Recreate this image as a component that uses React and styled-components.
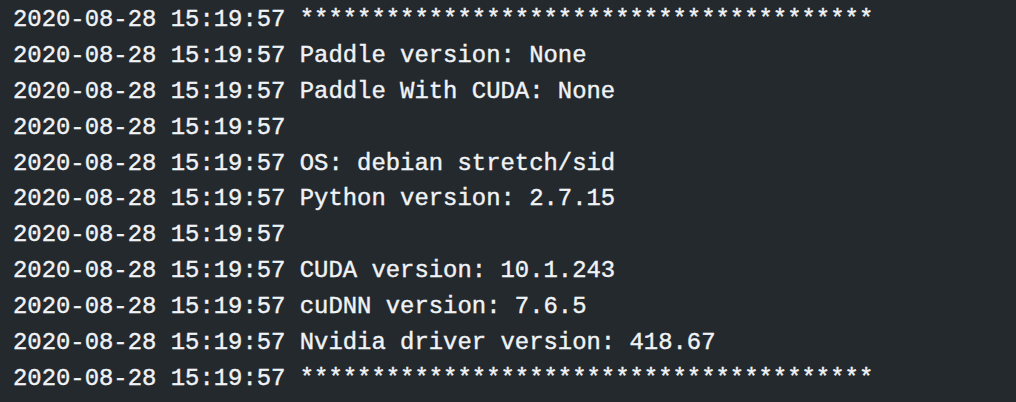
import styled, { createGlobalStyle } from "styled-components"

const GlobalStyle = createGlobalStyle`
    html, body {
        margin: 0;
        padding: 0;
        background: #24292e;
    }
`

const stamp = '2020-08-28 15:19:57'
const stars = '*'.repeat(40)

const lines = [
    stars,
    'Paddle version: None',
    'Paddle With CUDA: None',
    '',
    'OS: debian stretch/sid',
    'Python version: 2.7.15',
    '',
    'CUDA version: 10.1.243',
    'cuDNN version: 7.6.5',
    'Nvidia driver version: 418.67',
    stars,
]

export default function App(){
    return <>
        <GlobalStyle />
        <Terminal>
            {lines.map((text, i) => (
                <Line key={i}>{stamp} {text}</Line>
            ))}
        </Terminal>
    </>
}

const Terminal = styled.pre`
    margin: 0;
    padding: 2px 0 0 13px;
    width: 1016px;
    height: 402px;
    box-sizing: border-box;
    background: #24292e;
    color: #f0f3f6;
    font-family: "Liberation Mono", "Courier New", monospace;
    font-size: 23.9px;
    font-weight: normal;
    -webkit-text-stroke: 0.4px #f0f3f6;
    overflow: hidden;
`

const Line = styled.div`
    height: 35.9px;
    line-height: 35.9px;
    white-space: pre;
`
